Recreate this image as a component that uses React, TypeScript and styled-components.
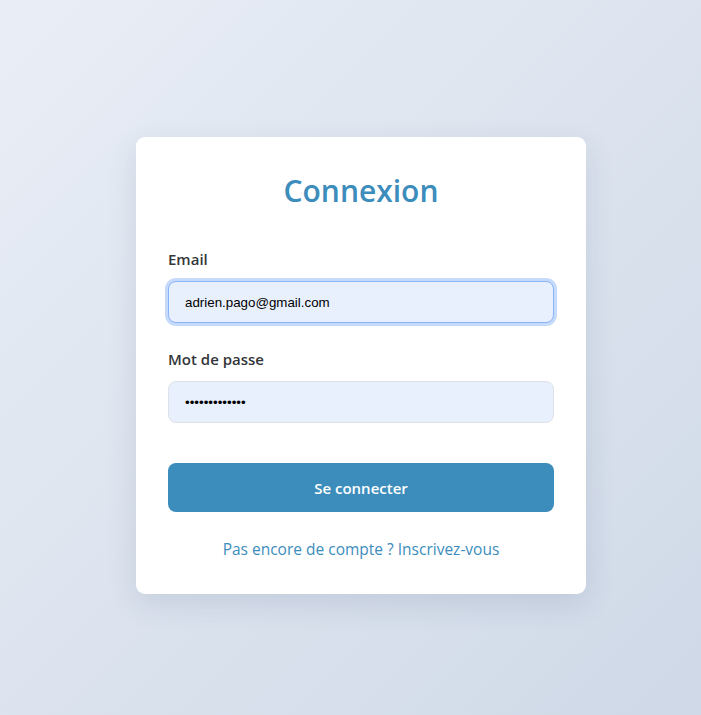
import React from 'react';
import styled, { createGlobalStyle } from 'styled-components';

const GlobalStyle = createGlobalStyle`
  html, body {
    margin: 0;
    padding: 0;
  }
  body {
    font-family: "Open Sans", "Noto Sans", sans-serif;
    background: linear-gradient(135deg, #e9eef6 0%, #cfd9e7 100%);
    min-height: 100vh;
  }
`;

const Page = styled.div`
  min-height: 100vh;
  box-sizing: border-box;
  padding: 16px 0 0 21px;
  display: flex;
  justify-content: center;
  align-items: center;
`;

const Card = styled.form`
  width: 450px;
  box-sizing: border-box;
  background: #ffffff;
  border-radius: 9px;
  padding: 32px 32px 34px;
  box-shadow: 0 10px 30px rgba(40, 60, 100, 0.12);
`;

const Title = styled.h1`
  margin: 0 0 36px;
  text-align: center;
  color: #3c8dbc;
  font-size: 30px;
  font-weight: 600;
  line-height: 44px;
`;

const Field = styled.div`
  display: flex;
  flex-direction: column;
  margin-bottom: 26px;
`;

const Label = styled.label`
  color: #33363a;
  font-size: 15px;
  font-weight: 600;
  line-height: 20px;
  margin-bottom: 12px;
`;

const Input = styled.input<{ $focused?: boolean }>`
  box-sizing: border-box;
  height: 42px;
  width: 100%;
  padding: 0 16px;
  border-radius: 8px;
  border: 1px solid ${(p) => (p.$focused ? '#8ab4f8' : '#dde2e8')};
  background: #e8f0fe;
  font-family: "Liberation Sans", Arial, sans-serif;
  font-size: 13.33px;
  color: #000;
  outline: none;
  box-shadow: ${(p) => (p.$focused ? '0 0 0 3px #c6dafc' : 'none')};
`;

const Submit = styled.button`
  display: block;
  width: 100%;
  height: 49px;
  margin-top: 40px;
  border: none;
  border-radius: 8px;
  background: #3c8dbc;
  color: #ffffff;
  font-family: inherit;
  font-size: 15px;
  font-weight: 600;
  cursor: pointer;
`;

const Footer = styled.p`
  margin: 26px 0 0;
  text-align: center;
  font-size: 15.5px;
  line-height: 22px;
`;

const Link = styled.a`
  color: #3c8dbc;
  text-decoration: none;
  font-weight: 500;
`;

export default function App() {
  return (
    <>
      <GlobalStyle />
      <Page>
        <Card onSubmit={(e) => e.preventDefault()}>
          <Title>Connexion</Title>
          <Field>
            <Label htmlFor="email">Email</Label>
            <Input id="email" type="email" defaultValue="adrien.pago@gmail.com" $focused autoFocus />
          </Field>
          <Field>
            <Label htmlFor="password">Mot de passe</Label>
            <Input id="password" type="password" defaultValue="adrienpago123" />
          </Field>
          <Submit type="submit">Se connecter</Submit>
          <Footer>
            <Link href="#">Pas encore de compte ? Inscrivez-vous</Link>
          </Footer>
        </Card>
      </Page>
    </>
  );
}
